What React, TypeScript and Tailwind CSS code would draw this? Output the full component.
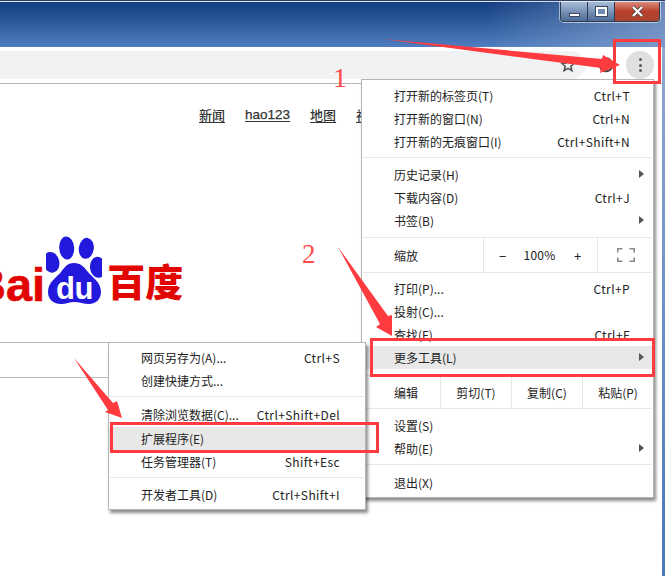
import React from "react";

const cjk = "font-['Noto_Sans_CJK_SC','Liberation_Sans',sans-serif]";

type Row = { label: string; keys?: string; more?: boolean; active?: boolean };

function Separator({ className = "" }: { className?: string }) {
  return <div className={`h-px bg-[#e6e6e6] ml-px mr-px ${className}`} />;
}

function MenuRow({ row, inset }: { row: Row; inset: string }) {
  return (
    <div className={`h-[23px] flex items-center justify-between relative ${inset} ${row.active ? "bg-[#e8e8e8]" : ""}`}>
      <span>{row.label}</span>
      {row.keys && <span className="tracking-[0.4px]">{row.keys}</span>}
      {row.more && <span className="absolute right-[9px] top-[7px] w-0 h-0 border-y-[4px] border-y-transparent border-l-[5px] border-l-[#555]" />}
    </div>
  );
}

function Rows({ rows, inset }: { rows: Row[]; inset: string }) {
  return (
    <>
      {rows.map((row) => (
        <MenuRow key={row.label} row={row} inset={inset} />
      ))}
    </>
  );
}

const mainInset = "pl-[32px] pr-[23px]";
const subInset = "pl-[32px] pr-[25px]";

function MainMenu() {
  return (
    <div className={`absolute left-[361px] top-[79px] w-[293px] h-[419px] bg-white border border-[#b5b5b5] shadow-[2px_3px_3px_rgba(0,0,0,0.45)] text-[12px] leading-none text-[#222] pt-[4px] ${cjk}`}>
      <Rows
        inset={mainInset}
        rows={[
          { label: "打开新的标签页(T)", keys: "Ctrl+T" },
          { label: "打开新的窗口(N)", keys: "Ctrl+N" },
          { label: "打开新的无痕窗口(I)", keys: "Ctrl+Shift+N" },
        ]}
      />
      <Separator className="mt-[4px] mb-[5px]" />
      <Rows
        inset={mainInset}
        rows={[
          { label: "历史记录(H)", more: true },
          { label: "下载内容(D)", keys: "Ctrl+J" },
          { label: "书签(B)", more: true },
        ]}
      />
      <Separator className="mt-[5px]" />
      <div className="h-[34px] flex items-center">
        <span className="w-[121px] pl-[32px] pt-[1px]">缩放</span>
        <div className="w-[114px] h-full flex items-center border-l border-[#e6e6e6]">
          <span className="w-[38px] pl-[15px] text-[13px]">−</span>
          <span className="w-[37px] text-center tracking-[0.2px] -ml-[1px]">100%</span>
          <span className="w-[38px] pl-[16px] text-[13px]">+</span>
        </div>
        <div className="flex-1 h-full flex items-center justify-center border-l border-[#e6e6e6]">
          <svg width="18" height="14" viewBox="0 0 18 14" fill="none" stroke="#8a8a8a" strokeWidth="1.6">
            <path d="M0.8 4.5V0.8H5.5M12.5 0.8H17.2V4.5M17.2 9.5V13.2H12.5M5.5 13.2H0.8V9.5" />
          </svg>
        </div>
      </div>
      <Separator className="mb-[4px]" />
      <Rows
        inset={mainInset}
        rows={[
          { label: "打印(P)...", keys: "Ctrl+P" },
          { label: "投射(C)..." },
          { label: "查找(F)...", keys: "Ctrl+F" },
          { label: "更多工具(L)", more: true, active: true },
        ]}
      />
      <Separator className="mt-[6px]" />
      <div className="h-[32px] flex items-center">
        <span className="w-[78px] pl-[32px] pt-[1px]">编辑</span>
        <span className="w-[71px] h-full flex items-center justify-center border-l border-[#e6e6e6] pt-[1px]">剪切(T)</span>
        <span className="w-[71px] h-full flex items-center justify-center border-l border-[#e6e6e6] pt-[1px]">复制(C)</span>
        <span className="flex-1 h-full flex items-center justify-center border-l border-[#e6e6e6] pt-[1px]">粘贴(P)</span>
      </div>
      <Separator className="mb-[5px]" />
      <Rows
        inset={mainInset}
        rows={[
          { label: "设置(S)" },
          { label: "帮助(E)", more: true },
        ]}
      />
      <Separator className="mt-[4px] mb-[6px]" />
      <MenuRow row={{ label: "退出(X)" }} inset={mainInset} />
    </div>
  );
}

function SubMenu() {
  return (
    <div className={`absolute left-[108px] top-[342px] w-[258px] h-[168px] bg-white border border-[#b5b5b5] shadow-[2px_3px_3px_rgba(0,0,0,0.45)] text-[12px] leading-none text-[#222] pt-[3px] ${cjk}`}>
      <Rows
        inset={subInset}
        rows={[
          { label: "网页另存为(A)...", keys: "Ctrl+S" },
          { label: "创建快捷方式..." },
        ]}
      />
      <Separator className="mt-[4px] mb-[6px]" />
      <MenuRow row={{ label: "清除浏览数据(C)...", keys: "Ctrl+Shift+Del" }} inset={subInset} />
      <div className="mt-[1px]">
        <Rows
          inset={subInset}
          rows={[
            { label: "扩展程序(E)", active: true },
            { label: "任务管理器(T)", keys: "Shift+Esc" },
          ]}
        />
      </div>
      <Separator className="mt-[4px] mb-[5px]" />
      <MenuRow row={{ label: "开发者工具(D)", keys: "Ctrl+Shift+I" }} inset={subInset} />
    </div>
  );
}

function WindowButtons() {
  return (
    <div className="flex h-[20px] ml-auto mr-[5px] rounded-b-[4px] overflow-hidden border border-t-0 border-[#2c3a52] shadow-[0_0_0_1px_rgba(255,255,255,0.55)]">
      <div className="w-[27px] flex items-center justify-center bg-gradient-to-b from-[#a9bcd6] to-[#4d6b96] border-r border-[#2c3a52]">
        <div className="w-[11px] h-[4px] mt-[6px] bg-white border border-[#3b4a60]" />
      </div>
      <div className="w-[27px] flex items-center justify-center bg-gradient-to-b from-[#a9bcd6] to-[#4d6b96] border-r border-[#2c3a52]">
        <div className="w-[11px] h-[9px] border-2 border-white outline outline-1 outline-[#3b4a60] bg-[#6f8bb3]" />
      </div>
      <div className="w-[44px] flex items-center justify-center bg-gradient-to-b from-[#d98a7c] via-[#b8402c] to-[#a8452f]">
        <svg width="13" height="11" viewBox="0 0 13 11">
          <path d="M2 1L11 10M11 1L2 10" stroke="#3b3b3b" strokeWidth="3.6" />
          <path d="M2 1L11 10M11 1L2 10" stroke="#fff" strokeWidth="2.4" />
        </svg>
      </div>
    </div>
  );
}

function Toolbar() {
  return (
    <div className="h-[37px] pr-[8px] bg-white flex items-center border-b border-[#b5b5b5]">
      <div className="h-[28px] w-[585px] bg-[#f1f2f4] rounded-r-[14px] flex items-center justify-end pr-[9px]">
        <svg width="16" height="16" viewBox="0 0 24 24" fill="none" stroke="#555" strokeWidth="2.4">
          <path d="M12 3l2.7 6 6.5.6-4.9 4.3 1.5 6.4L12 17l-5.8 3.3 1.5-6.4-4.9-4.3 6.5-.6z" />
        </svg>
      </div>
      <svg className="ml-[12px]" width="18" height="18" viewBox="0 0 18 18" fill="none" stroke="#444" strokeWidth="2">
        <path d="M15.5 10a6.5 6.5 0 1 1-2-6" />
      </svg>
      <div className="ml-[11px] w-[28px] h-[28px] rounded-full bg-[#e0e0e0] flex flex-col items-center justify-center gap-[2.5px]">
        <span className="w-[3px] h-[3px] rounded-full bg-[#5a5a5a]" />
        <span className="w-[3px] h-[3px] rounded-full bg-[#5a5a5a]" />
        <span className="w-[3px] h-[3px] rounded-full bg-[#5a5a5a]" />
      </div>
    </div>
  );
}

function BaiduLogo() {
  return (
    <div className="flex items-end h-[70px] -ml-[28px]">
      <span className="font-['Liberation_Sans',sans-serif] font-bold text-[47px] leading-[47px] text-[#e10601] mb-[-2px] [-webkit-text-stroke:0.6px_#e10601]">Bai</span>
      <svg className="ml-[1px] mr-[5px] shrink-0" width="56" height="70" viewBox="46 235 56 70">
        <g fill="#2319dc">
          <ellipse cx="51.3" cy="261.3" rx="8" ry="10.5" transform="rotate(-12 51.3 261.3)" />
          <ellipse cx="66.7" cy="247" rx="7.5" ry="11.5" transform="rotate(-4 66.7 247)" />
          <ellipse cx="86.3" cy="247.3" rx="7.5" ry="10.5" transform="rotate(8 86.3 247.3)" />
          <ellipse cx="98" cy="266.3" rx="8" ry="10.5" transform="rotate(-6 98 266.3)" />
          <path d="M74 262C67 262 64 267 61 271C57 276 48 281 48 291C48 299 54 303 61 303C66 303 70 301 74 301C79 301 84 303 89 303C96 303 101 298 101 291C101 281 92 276 88 271C84 266 81 262 74 262Z" />
        </g>
        <text x="74.5" y="298" textAnchor="middle" fontFamily="Liberation Sans, sans-serif" fontWeight="700" fontSize="31" fill="#fff" letterSpacing="-0.5">du</text>
      </svg>
      <span className={`font-black text-[38px] leading-[38px] text-[#e10601] mb-[7px] ${cjk}`}>百度</span>
    </div>
  );
}

function Arrows() {
  return (
    <svg className="absolute inset-0 pointer-events-none" width="665" height="576" viewBox="0 0 665 576">
      <g fill="#ff3b3f">
        <polygon points="383,39 602,59 603,55 620,65 600,73 601,68" />
        <polygon points="338,247 388,316 392,315 392,336 376,327 380,324" />
        <polygon points="74,358 113,403 117,401 122,418 105,412 108,410" />
      </g>
    </svg>
  );
}

export default function App() {
  return (
    <div className="relative w-[665px] h-[576px] overflow-hidden bg-white flex flex-col">
      <div className="h-[47px] shrink-0 flex items-start border-t border-[#2a3f63] bg-gradient-to-b from-[#123c80] via-[#2f5c9e] to-[#4f7dbf] relative">
        <div className="absolute inset-x-0 top-0 h-px bg-[#dfe8f3]" />
        <div className="absolute inset-y-0 right-0 w-[180px] bg-gradient-to-r from-transparent to-[#8fa8d0]/70" />
        <div className="relative flex-1 flex pt-px">
          <WindowButtons />
        </div>
      </div>
      <div className="flex-1 flex min-h-0">
        <div className="flex-1 min-w-0 flex flex-col">
          <Toolbar />
          <div className="h-[24px]" />
          <div className={`flex gap-[20px] pl-[199px] text-[13px] leading-none text-[#333] font-medium underline underline-offset-2 whitespace-nowrap ${cjk}`}>
            <span>新闻</span>
            <span className="font-['Liberation_Sans',sans-serif] font-normal text-[13.5px] [-webkit-text-stroke:0.25px_#333]">hao123</span>
            <span>地图</span>
            <span>视频</span>
          </div>
          <div className="h-[114px]" />
          <BaiduLogo />
          <div className="h-[36px]" />
          <div className="flex h-[36px]">
            <div className="w-[296px] border-y border-[#bbbbbb]" />
            <div className="w-[65px] border-t border-[#3385ff]" />
          </div>
        </div>
        <div className="w-[3px] shrink-0 bg-gradient-to-b from-[#8fa8d0] to-[#4a79bd]" />
      </div>

      <MainMenu />
      <SubMenu />

      <div className="absolute left-[613px] top-[39px] w-[48px] h-[45px] border-[3px] border-[#ff3b3f]" />
      <div className="absolute left-[370px] top-[338px] w-[285px] h-[39px] border-[3px] border-[#ff3b3f]" />
      <div className="absolute left-[110px] top-[422px] w-[269px] h-[31px] border-[3px] border-[#ff3b3f]" />
      <Arrows />
      <span className="absolute left-[333px] top-[62px] font-['Liberation_Serif',serif] text-[28px] leading-[32px] text-[#ff4d4f]">1</span>
      <span className="absolute left-[302px] top-[238px] font-['Liberation_Serif',serif] text-[27px] leading-[32px] text-[#ff4d4f]">2</span>
    </div>
  );
}
